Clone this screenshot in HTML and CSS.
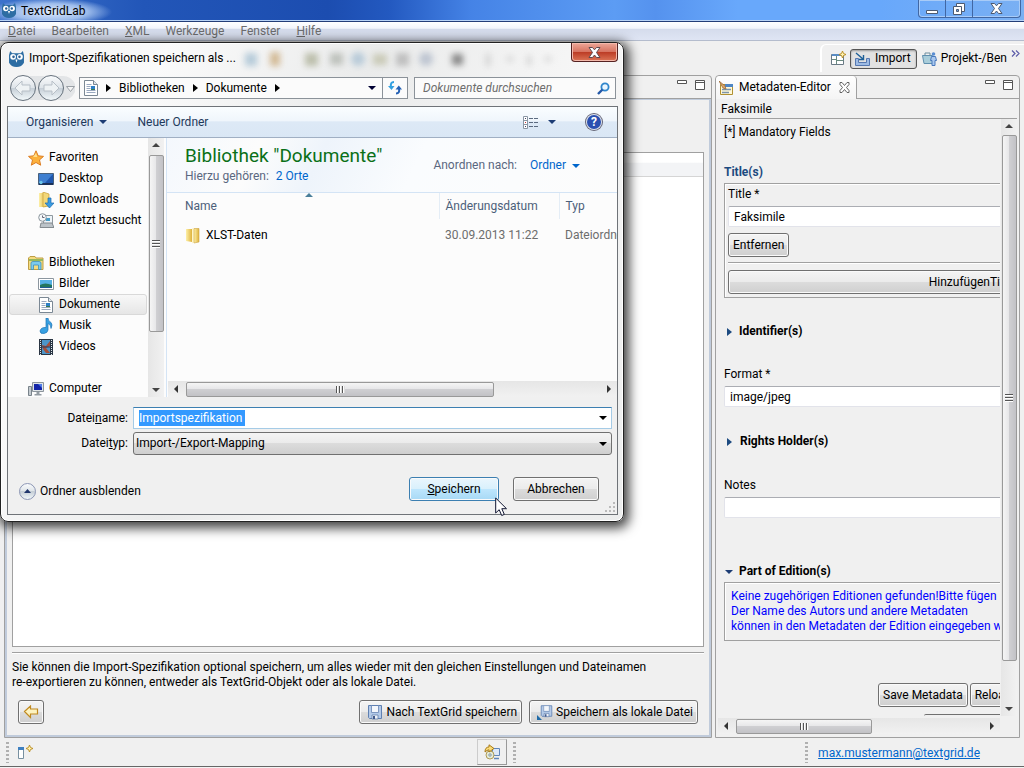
FILE: index.html
```html
<!DOCTYPE html>
<html lang="de">
<head>
<meta charset="utf-8">
<meta name="viewport" content="width=device-width, initial-scale=1">
<title>TextGridLab</title>
<link rel="stylesheet" href="styles.css">
</head>
<body>
<svg class="defs" width="0" height="0" aria-hidden="true">
  <defs>
    <linearGradient id="gold" x1="0" x2="1" y1="0" y2="0"><stop offset="0" stop-color="#fdf0a8"/><stop offset="1" stop-color="#dfb23c"/></linearGradient>
    <linearGradient id="glass" x1="0" x2="0" y1="0" y2="1"><stop offset="0" stop-color="#fbfcfd"/><stop offset=".5" stop-color="#dde3e8"/><stop offset=".5" stop-color="#c5ced6"/><stop offset="1" stop-color="#f4fafc"/></linearGradient>
    <symbol id="owl" viewBox="0 0 14 15">
      <path d="M1 0l2 2h8l2-2 1 4v7q-2 4-7 4T0 11V4z" fill="#2d6da3"/>
      <circle cx="3.800" cy="5.500" r="2.700" fill="#fff"/><circle cx="10.200" cy="5.500" r="2.700" fill="#fff"/>
      <circle cx="4.200" cy="5.500" r="1.200" fill="#2d5f92"/><circle cx="9.800" cy="5.500" r="1.200" fill="#2d5f92"/>
      <path d="M6 8h2l-1 3z" fill="#fff"/>
    </symbol>
    <symbol id="doc" viewBox="0 0 14 16">
      <path d="M.5.5h9l4 4v11H.5z" fill="#fff" stroke="#7b8894"/><path d="M9.500.5v4h4" fill="#dfe5ea" stroke="#7b8894"/>
      <path d="M2.500 4.500h5M2.500 6.500h4M2.500 8.500h4M2.500 10.500h9M2.500 12.500h9" stroke="#9aa9c0"/><path d="M7 6h4v4H7z" fill="#2d7fc6"/><path d="M7 9h4v1H7z" fill="#3a7a50"/>
    </symbol>
    <symbol id="disk" viewBox="0 0 16 16">
      <path d="M1.500 1.500h13v13h-12l-1-1z" fill="#b4cae8" stroke="#5f80b2"/><path d="M4 2h8v6H4z" fill="#f3f6fb"/><path d="M4.500 1.500v7h7v-7" fill="none" stroke="#7d97c0"/><path d="M5 11h6v4H5z" fill="#eef2f8" stroke="#5575a8" stroke-width=".7"/><path d="M6 12h2v3H6z" fill="#41598a"/>
    </symbol>
    <symbol id="spark" viewBox="0 0 7 7"><path d="M3.500 0l1 2.500L7 3.500l-2.500 1-1 2.500-1-2.500L0 3.500l2.500-1z" fill="#fff3b0" stroke="#b98a1d" stroke-width=".9"/></symbol>
  </defs>
</svg>

<div class="app">
  <header class="titlebar">
    <svg class="owl" width="14" height="15"><use href="#owl"/></svg>
    <h1>TextGridLab</h1>
    <div class="winbtns">
      <button type="button" aria-label="Minimieren"><svg width="14" height="12"><path d="M1.500 7.500h11v3h-11z" fill="#fff" stroke="#4d5a70"/></svg></button>
      <button type="button" aria-label="Wiederherstellen"><svg width="12" height="12"><path d="M3.500.5h8v8h-8z" fill="#fff" stroke="#4d5a70"/><path d="M.5 3.500h8v8h-8z" fill="#fff" stroke="#4d5a70"/><path d="M3.500 6.500h2v2h-2z" fill="#6fa5e8" stroke="#4d5a70"/></svg></button>
      <button class="wide" type="button" aria-label="Schließen"><svg width="13" height="11"><path d="M1 .5h3.500l2 2.300 2-2.300H12L8.500 5.500l3.500 5H8.500l-2-2.500-2 2.500H1l3.500-5z" fill="#fff" stroke="#4d5a70"/></svg></button>
    </div>
  </header>

  <nav class="menubar" aria-label="Menü">
    <button type="button"><u>D</u>atei</button><button type="button">Bearbeiten</button><button type="button"><u>X</u>ML</button><button type="button">Werkzeuge</button><button type="button">Fenster</button><button type="button"><u>H</u>ilfe</button>
  </nav>

  <div class="toolbar">
    <div class="perspectives">
      <button class="flat" type="button" aria-label="Perspektive öffnen"><svg width="15" height="15"><path d="M.5 3.500h12v10H.5z" fill="#fff" stroke="#6a7a86"/><path d="M1 3h11v2H1z" fill="#5b8dc4"/><path d="M5.500 5v8M5.500 9.500h7M1 8.500h4" stroke="#6a8a80"/><use href="#spark" x="8" y="0" width="7" height="7"/></svg></button>
      <button class="pressed" type="button"><svg width="15" height="14"><path d="M.5 6.500h3v4h8v-4h3v7H.5z" fill="#9dbbe4" stroke="#5678b0"/><path d="M1 1l7 6M8.500 3v4.500H4" fill="none" stroke="#1e6098" stroke-width="1.400"/></svg>Import</button>
      <button class="flat" type="button"><svg width="15" height="15"><path d="M.5 4.500h10v8H2z" fill="#a9cdda" stroke="#5f8fae"/><path d="M3 4V2h5v2" fill="none" stroke="#6d8d9f"/><circle cx="11.500" cy="3" r="1.800" fill="#5a8ed2"/><path d="M9.500 5.500h4l1 4h-1.500v5h-3v-5H8.500z" fill="#aac8ee" stroke="#4878bd"/></svg>Projekt-/Ben</button>
      <button class="more" type="button" aria-label="Mehr"><svg width="9" height="7"><path d="M1 .5l3 3-3 3M5 .5l3 3-3 3" fill="none" stroke="#5a5aa8" stroke-width="1.200"/></svg></button>
    </div>
  </div>

  <main class="workbench">
    <section class="view import-view" aria-label="Import">
      <div class="view-head"><span class="view-tools">
        <button type="button" aria-label="Minimieren"><svg width="10" height="10"><path d="M.5.5h9v3h-9z" fill="#fff" stroke="#555"/></svg></button>
        <button type="button" aria-label="Maximieren"><svg width="10" height="10"><path d="M.5.5h9v9h-9zM.5 2.500h9" fill="#fff" stroke="#555"/></svg></button></span>
      </div>
      <div class="import-body">
        <div class="list"><div class="list-head"></div></div>
        <hr>
        <p>Sie können die Import-Spezifikation optional speichern, um alles wieder mit den gleichen Einstellungen und Dateinamen<br>re-exportieren zu können, entweder als TextGrid-Objekt oder als lokale Datei.</p>
        <div class="actions">
          <button class="btn back" type="button" aria-label="Zurück"><svg width="16" height="14"><path d="M1.500 6.500l6-5.500v3h7v5h-7v3.500z" fill="#fdf3c0" stroke="#c08a20" stroke-width="1.200"/></svg></button>
          <button class="btn" type="button"><svg width="16" height="16"><use href="#disk"/></svg>Nach TextGrid speichern</button>
          <button class="btn" type="button"><svg width="16" height="16"><use href="#disk" x="3" y="0" width="13" height="14"/><path d="M0 11v5h5z" fill="#1e6aa8"/></svg>Speichern als lokale Datei</button>
        </div>
      </div>
    </section>

    <section class="view meta-view" aria-label="Metadaten-Editor">
      <div class="view-head">
        <div class="tab"><svg width="15" height="14"><path d="M1.500 3.500h12v10h-12z" fill="#fff8d8" stroke="#b09030"/><path d="M6 3h8v3H6z" fill="#4f86c4"/><path d="M3 8.500h9M3 11.500h7" stroke="#7c93a8" stroke-width="1.500"/><path d="M0 0l6 5 1 3-3-1z" fill="#dfa76d" stroke="#9a6a38" stroke-width=".8"/></svg><h2>Metadaten-Editor</h2>
        <button type="button" aria-label="Schließen"><svg width="11" height="11"><path d="M1 .5h2l2.500 3 2.500-3h2v2L7.500 5.500l2.500 3v2H8l-2.500-3-2.500 3H1v-2l2.500-3L1 2.500z" fill="#fff" stroke="#555" stroke-width=".9"/></svg></button></div>
        <span class="view-tools">
        <button type="button" aria-label="Minimieren"><svg width="10" height="10"><path d="M.5.5h9v3h-9z" fill="#fff" stroke="#555"/></svg></button>
        <button type="button" aria-label="Maximieren"><svg width="10" height="10"><path d="M.5.5h9v9h-9zM.5 2.500h9" fill="#fff" stroke="#555"/></svg></button></span>
      </div>
      <p class="crumb">Faksimile</p>
      <div class="scroll-grid">
        <form class="meta-form">
          <p class="mandatory">[*] Mandatory Fields</p>
          <h3 class="blue">Title(s)</h3>
          <div class="group">
            <label for="title">Title *</label>
            <input id="title" type="text" value="Faksimile">
            <button class="btn" type="button">Entfernen</button>
            <hr>
            <button class="btn add" type="button">HinzufügenTitle</button>
          </div>
          <h3 class="fold"><i class="tri-r"></i>Identifier(s)</h3>
          <label for="format">Format *</label>
          <input id="format" type="text" value="image/jpeg">
          <h3 class="fold mid"><i class="tri-r"></i>Rights Holder(s)</h3>
          <label for="notes">Notes</label>
          <input id="notes" type="text">
          <h3 class="fold last"><i class="tri-d"></i>Part of Edition(s)</h3>
          <div class="group note">Keine zugehörigen Editionen gefunden!Bitte fügen<br>Der Name des Autors und andere Metadaten<br>können in den Metadaten der Edition eingegeben w</div>
          <div class="meta-actions"><button class="btn" type="button">Save Metadata</button><button class="btn" type="button">Reload</button></div>
          <div class="meta-next"></div>
        </form>
        <div class="vbar"><i class="tri-u"></i><div class="thumb"><i class="grip"></i></div><i class="tri-dn"></i></div>
        <div class="hbar"><i class="tri-l"></i><div class="track"><div class="thumb"><i class="grip"></i></div></div><i class="tri-rt"></i></div>
      </div>
    </section>
  </main>

  <footer class="status">
    <i class="handle"></i>
    <button class="flat" type="button" aria-label="Schnellansicht"><svg width="15" height="15"><path d="M.5 2.500h5v11h-5z" fill="#fff" stroke="#7890a0"/><path d="M0 2h6v3H0z" fill="#3f80c0"/><use href="#spark" x="8" y="0" width="7" height="7"/></svg></button>
    <button class="flat launch" type="button" aria-label="Aktualisierung"><svg width="17" height="16"><path d="M8.500 4.500h7v7h-7z" fill="#dce8f8" stroke="#5f86ba"/><path d="M10 14.500h5" stroke="#5f86ba" stroke-width="1.500"/><circle cx="6" cy="11" r="4" fill="#e4ead8" stroke="#b09c58"/><circle cx="6" cy="11" r="1.200" fill="#fff" stroke="#7890a0"/><path d="M1 8q0-5 4-5V.8L10 4.500 5 8V5.800Q3 6 1 8z" fill="#fbdc78" stroke="#a87a18"/></svg></button>
    <i class="handle"></i>
    <i class="handle end"></i>
    <a href="mailto:max.mustermann@textgrid.de">max.mustermann@textgrid.de</a>
  </footer>
  <div class="desk-edge"></div>
</div>

<section class="dialog" role="dialog" aria-labelledby="dlg-title">
  <svg class="haze" width="320" height="26" aria-hidden="true"><g opacity=".5">
    <path d="M12 5h12v13H12z" fill="#7aa3c0"/><path d="M37 4h10v14H37z" fill="#b5843c"/><path d="M72 5h13v13H72z" fill="#8c8f6a"/><path d="M97 5h13v12H97z" fill="#8f958c"/><circle cx="125" cy="11" r="7" fill="#86aac5"/><path d="M140 6h14v11h-14z" fill="#aaa983"/><path d="M163 5h13v13h-13z" fill="#929292"/><circle cx="193" cy="11" r="7" fill="#8f9db5"/><path d="M219 6h11v11h-11z" fill="#222"/><path d="M253 6h4v12h-4zM274 9h6v4h-6zM294 8h4v9h-4zM312 9h6v4h-6z" fill="#aaa"/></g></svg>
  <header class="dlg-title"><svg width="15" height="16"><use href="#owl"/></svg><h2 id="dlg-title">Import-Spezifikationen speichern als ...</h2>
    <button class="dlg-close" type="button" aria-label="Schließen"><svg width="13" height="11"><path d="M1 .5h3.500l2 2.300 2-2.300H12L8.500 5.500l3.500 5H8.500l-2-2.500-2 2.500H1l3.500-5z" fill="#fff" stroke="#5d4b50"/></svg></button>
  </header>
  <div class="nav">
    <svg class="arrows" width="68" height="28" aria-hidden="true"><path d="M14 2h40q8 0 12 8v8q-4 8-12 8H14z" fill="#d0d4d7" opacity=".5"/><g stroke="#66717c" fill="url(#glass)"><circle cx="14" cy="14" r="12.500"/><circle cx="42" cy="14" r="12.500"/></g><path d="M6 14l7-7v4h8v6h-8v4zM50 14l-7-7v4h-8v6h8v4z" fill="#eef2f4" stroke="#b7bfc7"/><path d="M57.500 12.500h8l-4 5z" fill="#f5f5f5" stroke="#9aa0a6"/></svg>
    <div class="address">
      <svg width="14" height="16"><use href="#doc"/></svg><i class="tri-k"></i><a href="#bibliotheken">Bibliotheken</a><i class="tri-k"></i><a href="#dokumente">Dokumente</a><i class="tri-k"></i>
      <button class="drop" type="button" aria-label="Verlauf"><i class="tri-navy"></i></button>
      <button class="refresh" type="button" aria-label="Aktualisieren"><svg width="14" height="14"><path d="M6 1Q2 1 3 6" fill="none" stroke="#33a0e0" stroke-width="2"/><path d="M0 5h6.500L3.500 9z" fill="#33a0e0"/><path d="M8 12.500q4 0 3-5" fill="none" stroke="#2460b4" stroke-width="2"/><path d="M7.500 8.500H14L10.800 4.500z" fill="#2460b4"/></svg></button>
    </div>
    <div class="search"><input type="text" aria-label="Suchen" placeholder="Dokumente durchsuchen"><svg width="13" height="13"><circle cx="8" cy="5" r="3.600" fill="#eaf6ff" stroke="#2f86cc" stroke-width="1.800"/><path d="M5.500 7.500L1 12" stroke="#2458a8" stroke-width="2.400"/></svg></div>
  </div>

  <div class="client">
    <div class="commands">
      <button type="button">Organisieren<i class="tri-b"></i></button><button type="button">Neuer Ordner</button>
      <button class="viewmode" type="button" aria-label="Ansicht"><svg width="15" height="13"><path d="M.5.5h4v12h-4zM.5 4.500h4M.5 8.500h4" fill="#fff" stroke="#8a96a4"/><path d="M2 2h1v1H2zM2 10h1v1H2z" fill="#446"/><path d="M2 6h1v1H2z" fill="#c33"/><path d="M6 2.500h4M11 2.500h4M6 6.500h4M11 6.500h4M6 10.500h4M11 10.500h4" stroke="#5c6b80"/></svg><i class="tri-b"></i></button>
      <button class="help" type="button" aria-label="Hilfe">?</button>
    </div>
    <div class="panes">
      <nav class="tree" aria-label="Ordner">
        <ul>
          <li><a href="#f"><svg width="16" height="16"><path d="M8 .8l2.200 5 5.300.6-4 3.500 1.200 5.300L8 12.500l-4.700 2.700 1.200-5.300-4-3.500 5.300-.6z" fill="#fcb13c" stroke="#dc7d24"/><path d="M8 3l1.300 4H5z" fill="#ffe08a"/></svg>Favoriten</a></li>
          <li class="sub"><a href="#d"><svg width="16" height="14"><path d="M.5 1.500h15v11H.5z" fill="#1f57ae" stroke="#49617c"/><path d="M1 2h14L7 11H1z" fill="#3f7fd0"/><path d="M1 11h14v2H1z" fill="#1b3158"/><circle cx="3" cy="10.500" r="1.700" fill="#6dc6e8"/></svg>Desktop</a></li>
          <li class="sub"><a href="#dl"><svg width="16" height="16"><path d="M1 1h7v14H1z" fill="url(#gold)"/><path d="M5 0l6 2v12l-6 1z" fill="#f3d878" stroke="#c59d3a" stroke-width=".7"/><path d="M10 6h3v5h3l-4.500 5L7 11h3z" fill="#3a9be0" stroke="#1d6aaf" stroke-width=".7"/></svg>Downloads</a></li>
          <li class="sub"><a href="#z"><svg width="16" height="16"><path d="M5.500 2.500h9v9h-9z" fill="#eef4f8" stroke="#8e989f"/><path d="M3 10h11l2 4.500H2z" fill="#bcc3c8" stroke="#848b90"/><path d="M8 5h4v3H8z" fill="#48a0cc"/><circle cx="4.500" cy="4.500" r="3.800" fill="#f5f8fa" stroke="#8b959c"/><path d="M4.500 2.500v2H6.500" fill="none" stroke="#667"/></svg>Zuletzt besucht</a></li>
          <li class="top"><a href="#bibliotheken"><svg width="16" height="14"><path d="M.5 2L2 .5h5L8 2h7v11.500H.5z" fill="#f5dc80" stroke="#bf9e45"/><path d="M1 4h14" stroke="#97b85c" stroke-width="2"/><path d="M3 13.500V7q0-1.500 2-1.500h6q2 0 2 1.500v6.500h-2.500V9h-5v4.500z" fill="#7ccbee" stroke="#3d91bd" stroke-width=".8"/></svg>Bibliotheken</a></li>
          <li class="sub"><a href="#bi"><svg width="16" height="12"><path d="M.5.5h15v11H.5z" fill="#fff" stroke="#8c969f"/><path d="M2 2h12v8H2z" fill="#55b1e5"/><path d="M2 7q5-3 12 0v3H2z" fill="#23765e"/><path d="M2 9h12v1H2z" fill="#1e5b95"/></svg>Bilder</a></li>
          <li class="sub sel"><a href="#dokumente"><svg width="16" height="16"><use href="#doc"/></svg>Dokumente</a></li>
          <li class="sub"><a href="#m"><svg width="16" height="16"><path d="M8 0h2q0 3 3 4.500 2 2 0 6 0-4-3-5v6.500q-.5 3-4 3.500-4 .5-4-2.500 1-4 6-3.500z" fill="#38a1e2" stroke="#1e72b6" stroke-width=".7"/></svg>Musik</a></li>
          <li class="sub"><a href="#v"><svg width="16" height="16"><path d="M1 0h14v16H1z" fill="#2b3644"/><path d="M4 1h8v14H4z" fill="#4c95c8"/><path d="M4 6l4 1 4-5v5L8 9l4 5H8L5 10z" fill="#a64f38"/><path d="M4 8h8" stroke="#243d60"/><path d="M2.500 1v15M13.500 1v15" stroke="#dfe8ee" stroke-dasharray="1 1"/></svg>Videos</a></li>
          <li class="top"><a href="#c"><svg width="16" height="14"><path d="M.5 4.500h3v9h-3z" fill="#c4cbd0" stroke="#79838b"/><path d="M4.500.5h11v9h-11z" fill="#dfe4e8" stroke="#8c959c"/><path d="M6 2h8v6H6z" fill="#1425a8"/><path d="M10 2h4v4z" fill="#4f7ce8"/><path d="M8.500 10h3v2h2v1.500h-7V12h2z" fill="#939ca3"/></svg>Computer</a></li>
        </ul>
      </nav>
      <div class="vbar"><i class="tri-u"></i><div class="thumb"><i class="grip"></i></div><i class="tri-dn"></i></div>
      <div class="files">
        <div class="lib">
          <div><h3>Bibliothek "Dokumente"</h3><p>Hierzu gehören: <a href="#orte">2 Orte</a></p></div>
          <p class="arrange">Anordnen nach: <button type="button">Ordner<i class="tri-o"></i></button></p>
        </div>
        <div class="tablewrap"><table>
          <thead><tr><th class="c1">Name<i class="sort"></i></th><th class="c2">Änderungsdatum</th><th class="c3">Typ</th></tr></thead>
          <tbody><tr><td><span class="fname"><svg width="15" height="17"><path d="M1 2h6v13l-6-1z" fill="url(#gold)"/><path d="M7 1l3 1v13l-3 1.500z" fill="#fff6c8"/><path d="M9 1.500h5V15l-5 1z" fill="url(#gold)" stroke="#cda544" stroke-width=".6"/></svg>XLST-Daten</span></td><td>30.09.2013 11:22</td><td>Dateiordner</td></tr></tbody>
        </table></div>
        <div class="hbar"><i class="tri-l"></i><div class="track"><div class="thumb"><i class="grip"></i></div></div><i class="tri-rt"></i></div>
      </div>
    </div>
    <form class="savebox">
      <label for="fn">Datei<u>n</u>ame:</label>
      <div class="combo"><input id="fn" type="text" value="Importspezifikation"><button type="button" aria-label="Liste"><i class="tri-black"></i></button></div>
      <label for="ft">Datei<u>t</u>yp:</label>
      <div class="pick"><select id="ft"><option>Import-/Export-Mapping</option></select><i class="tri-black"></i></div>
      <div class="dlg-actions">
        <button class="hide" type="button"><svg width="17" height="17"><circle cx="8.500" cy="8.500" r="8" fill="url(#glass)" stroke="#8c96b4"/><path d="M5 10h7L8.500 6z" fill="#20366c"/></svg>Ordner ausblenden</button>
        <button class="btn primary" type="button"><span><u>S</u>peichern</span></button>
        <button class="btn" type="button">Abbrechen</button>
      </div>
      <svg class="resize" width="10" height="10" aria-hidden="true"><path d="M8 0h2v2H8zM4 4h2v2H4zM8 4h2v2H8zM0 8h2v2H0zM4 8h2v2H4zM8 8h2v2H8z" fill="#bbb"/></svg>
    </form>
  </div>
</section>
<svg class="cursor" width="13" height="20" aria-hidden="true"><path d="M.7 1v15l3.500-3.300 2.500 5.800 2.600-1.100-2.500-5.700h4.700z" fill="#fff" stroke="#111632"/></svg>
</body>
</html>
```
FILE: styles.css
```css
* { box-sizing: border-box; }
body { margin: 0; font: 12px/15px Roboto, "Open Sans", sans-serif; color: #000; background: #f0f0f0; }
h1, h2, h3, p, ul { margin: 0; padding: 0; font-size: inherit; font-weight: 400; }
ul { list-style: none; }
button, input, select { font: inherit; color: inherit; margin: 0; }
button { background: none; border: 0; padding: 0; white-space: nowrap; }
a { color: inherit; text-decoration: none; }
svg { display: block; flex: none; }
i { display: block; flex: none; }
.defs { position: absolute; }
hr { width: 100%; margin: 0; border: 0; border-top: 1px solid #a0a0a0; border-bottom: 1px solid #fff; }

.app { min-height: 100vh; display: flex; flex-direction: column; overflow: hidden; }

.titlebar { height: 22px; display: flex; align-items: center; gap: 5px; padding-left: 2px; border-bottom: 1px solid #243e78; box-shadow: inset 0 -1px #b8d3f6;
  background: radial-gradient(ellipse 62px 14px at 50px 12px, #dfeafc 0, #9ebdec 60%, transparent 100%), linear-gradient(90deg, #3c72cc 0, #2256b8 14%, #1c4db0 32%, #2359c0 38%, #4583e6 46%, #5c9cf4 60%, #5592ee 64%, #68a8fb 72%, #68a8fb 86%, #7ab0f3 100%); }
.titlebar h1 { flex: 1; line-height: 20px; }
.winbtns { display: flex; align-self: flex-start; height: 18px; margin-right: 3px; border: 1px solid #4167a3; border-top: 0; border-radius: 0 0 4px 4px; box-shadow: inset 0 0 0 1px #a8cbf7; }
.winbtns button { width: 27px; display: grid; place-items: center; border-right: 1px solid #4167a3; }
.winbtns .wide { width: 47px; border: 0; }

.menubar { height: 19px; display: flex; align-items: center; gap: 16px; padding: 1px 0 0 8px; color: #6d6d6d; background: linear-gradient(#fff 0, #f2f5fb 35%, #d5dcec 40%, #dfe5f4 100%); border-bottom: 1px solid #b4bccd; }

.toolbar { height: 34px; display: flex; justify-content: flex-end; padding-top: 3px; }
.perspectives { width: 204px; height: 28px; display: flex; align-items: center; gap: 4px; padding-left: 9px; border-top: 1px solid #fff; border-left: 2px solid #fff; border-radius: 6px 0 0 0; }
.flat { display: flex; align-items: center; gap: 4px; }
.pressed { display: flex; align-items: center; gap: 5px; height: 20px; padding: 0 5px 0 4px; margin-right: 1px; border: 1px solid #555; border-radius: 3px; background: #e2e2e2; box-shadow: inset 0 1px 2px #999; }
.more { align-self: flex-start; padding-top: 5px; }

.workbench { flex: 1; display: grid; grid-template-columns: minmax(0, 1fr) 305px; gap: 3px; padding: 0 4px; }
.view { display: flex; flex-direction: column; min-width: 0; border: 1px solid #a0a0a0; border-radius: 4px 4px 0 0; }
.view-head { height: 23px; display: flex; border-bottom: 1px solid #a0a0a0; }
.view-tools { display: flex; gap: 8px; margin-left: auto; padding: 4px 6px 0 0; }
.view-tools button { height: 10px; }
.import-body { flex: 1; display: flex; flex-direction: column; padding: 52px 5px 11px; border: 2px solid #c0cbdb; border-top: 1px solid #c0cbdb; }
.list { flex: 1; border: 1px solid #a0a0a0; background: #fff; margin-bottom: 5px; }
.list-head { height: 24px; border-bottom: 1px solid #d5d5d5; background: linear-gradient(#fff 40%, #f3f4f6 45%); }
.import-body p { padding: 6px 0 10px; white-space: nowrap; }
.actions { display: flex; gap: 7px; padding: 0 6px; }
.btn { display: inline-flex; align-items: center; justify-content: center; gap: 3px; height: 24px; padding: 0 4px; border: 1px solid #707070; border-radius: 3px; background: linear-gradient(#f4f4f4 0, #ebebeb 49%, #dcdcdc 50%, #cfcfcf 100%); box-shadow: inset 0 0 0 1px #fafafa; }
.actions .btn { padding-left: 7px; }
.actions .back { width: 26px; margin-right: auto; padding: 0; }

.tab { display: flex; align-items: center; gap: 5px; height: 23px; padding: 0 6px 0 3px; background: linear-gradient(#fff, #f4f4f4); border-right: 1px solid #a0a0a0; border-radius: 4px 4px 0 0; }
.tab button { margin-left: 3px; }
.crumb { height: 20px; margin: 0 2px; padding: 3px 3px 0; border-bottom: 1px solid #a0a0a0; }
.scroll-grid { flex: 1; display: grid; grid-template: minmax(0, 1fr) 18px / minmax(0, 1fr) 16px; padding: 0 2px 3px; column-gap: 1px; }
.meta-form { display: flex; flex-direction: column; align-items: stretch; overflow: hidden; padding-left: 6px; white-space: nowrap; }
.meta-form > * { flex: none; }
.mandatory { padding-top: 6px; height: 46px; }
.meta-form h3 { font-weight: 700; }
.blue { color: #1c4a80; height: 18px; }
.group { margin-right: -4px; padding: 3px; border: 1px solid #a0a0a0; box-shadow: inset 1px 1px #fff; }
.group label, .group input { display: block; }
.meta-form input { width: 320px; height: 21px; padding: 0 5px; border: 1px solid #e2e3ea; border-top-color: #abadb3; border-radius: 2px 0 0 2px; background: #fff; }
.group input { margin: 4px 0 6px; }
.group hr { margin: 5px 0 6px; }
.group .add { display: flex; width: 486px; }
.fold { display: flex; align-items: center; gap: 7px; padding-left: 3px; margin: 26px 0 28px; }
.meta-form > label { margin-bottom: 4px; }
.fold.mid { gap: 8px; margin: 27px 0 29px; }
.fold.last { margin: 46px 0 3px; gap: 6px; padding-left: 1px; }
.note { padding: 6px; color: #00f; }
.meta-actions { display: flex; gap: 2px; margin-top: auto; padding: 0 0 7px 154px; }
.meta-next { height: 2px; margin-left: 200px; border-top: 1px solid #707070; border-radius: 3px 0 0 0; }

.tri-r, .tri-k { border: 4px solid transparent; border-left: 5px solid #1c4a80; border-right: 0; }
.tri-k { border-left-color: #000; }
.tri-d, .tri-b, .tri-navy, .tri-o, .tri-black, .tri-dn { border: 4px solid transparent; border-top: 4px solid #1c3c74; border-bottom: 0; }
.tri-navy { border-top-color: #003; }
.tri-o { border-top-color: #06c; }
.tri-black { border-top-color: #000; }
.tri-dn, .tri-u { border-width: 4px; margin: 5px 4px; }
.tri-dn { border-top-color: #444; border-bottom: 0; }
.tri-u { border: 4px solid transparent; border-bottom-color: #444; border-top: 0; }
.tri-l, .tri-rt { border: 4px solid transparent; margin: 0 6px; }
.tri-l { border-right-color: #333; border-left: 0; }
.tri-rt { border-left-color: #333; border-right: 0; }
.vbar { display: flex; flex-direction: column; align-items: center; justify-content: space-between; background: linear-gradient(90deg, #e6e6e6, #f1f1f1); }
.vbar .thumb { width: 15px; display: grid; place-items: center; border: 1px solid #999; border-radius: 2px; background: linear-gradient(90deg, #f5f5f5 0, #e6e6e8 48%, #cfcfd2 50%, #c2c2c6 100%); }
.vbar .grip { width: 8px; height: 8px; background: repeating-linear-gradient(#555 0 1px, #fff 1px 2px, #ddd 2px 3px); }
.meta-view .thumb { height: 526px; }
.meta-view .vbar .thumb { margin-bottom: auto; margin-top: 7px; }
.meta-view .vbar .tri-u { margin-bottom: 0; }
.hbar { display: flex; align-items: center; height: 16px; background: linear-gradient(#e6e6e6, #f1f1f1); }
.meta-view .hbar { align-self: end; }
.track { flex: 1; }
.meta-view .hbar .thumb, .hbar .thumb { height: 15px; display: grid; place-items: center; border: 1px solid #999; border-radius: 2px; background: linear-gradient(#f5f5f5 0, #e6e6e8 48%, #cfcfd2 50%, #c2c2c6 100%); }
.hbar .grip { width: 9px; height: 7px; background: repeating-linear-gradient(90deg, #555 0 1px, #fff 1px 2px, #ddd 2px 3px); }
.meta-view .hbar .thumb { width: 136px; margin-left: 2px; }

.status { height: 28px; display: flex; align-items: center; padding-left: 6px; }
.handle { width: 3px; height: 21px; background: repeating-linear-gradient(#b0b0b0 0 2px, transparent 2px 4px); }
.status .flat { margin-left: 9px; }
.status .launch { width: 30px; height: 26px; justify-content: center; margin: 0 6px 0 444px; border: 1px solid #ccc; border-right-color: #999; border-bottom-color: #999; }
.status .end { margin-left: auto; }
.status a { margin: 2px 44px 0 10px; color: #06c; text-decoration: underline; }
.desk-edge { height: 2px; background: #f4f4f4; border-top: 1px solid #666; }

.dialog { position: absolute; left: 0; top: 42px; width: 624px; padding: 0 5px 6px 6px; border: 1px solid #222; border-radius: 8px; background: linear-gradient(115deg, #f3f3f3 0, #fafafa 20%, #eaebeb 45%, #f6f6f6 70%, #eceded 100%); box-shadow: inset 0 0 0 1px #fff, 2px 3px 12px 3px rgba(0, 0, 0, .75); }
.haze { position: absolute; left: 232px; top: 5px; filter: blur(3px); }
.dlg-title { display: flex; align-items: center; height: 31px; gap: 5px; padding-left: 2px; }
.dlg-title h2 { flex: 1; padding-bottom: 1px; }
.dlg-close { align-self: flex-start; display: grid; place-items: center; width: 47px; height: 19px; border: 1px solid #522; border-top: 0; border-radius: 0 0 4px 4px; background: linear-gradient(#eda798 0, #d77461 48%, #bb3a24 50%, #dc7556 100%); box-shadow: inset 0 0 0 1px #f3b9ab; }
.nav { display: flex; align-items: center; height: 28px; margin-bottom: 4px; padding: 0 2px; gap: 2px; }
.address { flex: 1; display: flex; align-items: center; height: 22px; border: 1px solid #8b9299; background: #fbfbfb; padding-left: 4px; }
.address .tri-k { margin: 0 8px; }
.address .drop { margin-left: auto; padding: 8px 6px; }
.address .refresh { display: grid; place-items: center; width: 25px; height: 20px; border-left: 1px solid #8b9299; }
.search { width: 202px; height: 22px; display: flex; align-items: center; margin-left: 4px; padding: 0 5px 0 8px; border: 1px solid #8b9299; background: #fbfbfb; }
.search input { flex: 1; min-width: 0; padding: 0; border: 0; outline: 0; background: none; font-style: italic; }
.search input::placeholder { color: #6d6d6d; opacity: 1; }

.client { border: 1px solid #6f7378; background: #f0f0f0; }
.commands { display: flex; align-items: center; height: 31px; padding: 0 16px 0 18px; color: #1e395b; background: linear-gradient(#fafdff 0, #f0f6fc 45%, #dde9f6 50%, #dae7f5 100%); border-bottom: 1px solid #a0afc3; }
.commands button { display: flex; align-items: center; gap: 6px; margin-right: 30px; }
.commands .viewmode { margin: 0 31px 0 auto; gap: 10px; }
.commands .help { justify-content: center; width: 14px; height: 14px; margin: 0; border-radius: 50%; background: #2a4fb0; color: #fff; font-weight: 700; box-shadow: 0 0 0 1px #dde4f0, 0 0 0 2px #667; }
.panes { display: grid; grid-template-columns: 140px 16px minmax(0, 1fr); height: 259px; background: #fcfcfc; }
.tree { overflow: hidden; padding-top: 9px; }
.tree a { display: flex; align-items: center; gap: 5px; height: 21px; padding-left: 19px; border: 1px solid transparent; white-space: nowrap; }
.tree .sub a { padding-left: 29px; }
.tree .top { margin-top: 21px; }
.tree .sel a { margin: 0 1px; padding-left: 28px; border-color: #d9d9d9; border-radius: 3px; background: linear-gradient(#f8f8f8, #e6e6e6); }
.panes .vbar .thumb { height: 177px; margin-bottom: auto; }
.panes .vbar .tri-u { margin-bottom: 8px; }
.files { display: flex; flex-direction: column; min-width: 0; margin-left: 2px; border-left: 1px solid #d4e4f5; }
.lib { display: flex; justify-content: space-between; height: 54px; padding: 7px 37px 0 18px; background: linear-gradient(115deg, #f4f8fd 0, #fcfcfc 20%, #eef4fb 34%, #fafcfe 55%, #fcfcfc 100%); color: #5a6780; }
.lib h3 { font-size: 19px; line-height: 22px; color: #0a7018; }
.lib p { padding-top: 2px; }
.lib p a { margin-left: 4px; color: #06c; }
.lib .arrange { padding-top: 13px; }
.arrange button { display: inline-flex; align-items: center; gap: 6px; margin-left: 10px; color: #06c; }
.tablewrap { flex: 1; overflow: hidden; border-top: 1px solid #d4e4f5; }
table { width: 520px; table-layout: fixed; border-collapse: collapse; color: #6d6d6d; }
th, td { padding: 0 6px; text-align: left; font-weight: 400; white-space: nowrap; }
th { position: relative; height: 26px; color: #4c607a; border-right: 1px solid #e4edf6; }
td { height: 33px; }
.c1 { width: 272px; }
.c2 { width: 120px; }
th:first-child, td:first-child { padding-left: 18px; }
.sort { position: absolute; left: 138px; top: 0; border: 4px solid transparent; border-top: 0; border-bottom-color: #4a7f9a; }
.fname { display: flex; align-items: center; gap: 6px; color: #000; }
.files .thumb { width: 308px; margin-left: 2px; }
.files .hbar { margin-left: 1px; }

.savebox { position: relative; display: grid; grid-template-columns: 120px minmax(0, 1fr); gap: 3px 5px; align-items: center; padding: 10px 5px 13px 0; }
.savebox > label { text-align: right; }
.combo { display: flex; align-items: center; justify-content: space-between; height: 22px; padding: 0 4px 0 5px; border: 1px solid #a5cbe6; border-top-color: #3c7fb1; background: #fff; }
.combo input { display: block; width: 106px; height: 16px; padding: 0; border: 0; outline: 0; background: #39f; color: #fff; field-sizing: content; }
.pick { display: grid; grid-template-columns: minmax(0, 1fr) auto; align-items: center; height: 23px; border: 1px solid #707070; border-radius: 3px; background: linear-gradient(#f4f4f4 0, #ebebeb 49%, #dcdcdc 50%, #cfcfcf 100%); padding-right: 4px; }
.pick select { appearance: none; border: 0; background: none; padding: 0 2px; outline: 0; }
.dlg-actions { grid-column: 1 / -1; display: flex; align-items: center; gap: 14px; padding: 19px 13px 0 11px; }
.dlg-actions .btn { width: 86px; }
.dlg-actions .primary { width: 90px; border-color: #3c7fb1; background: linear-gradient(#eaf6fd 0, #d9f0fc 49%, #bee6fd 50%, #a7d9f5 100%); }
.hide { display: flex; align-items: center; gap: 4px; margin-right: auto; padding-top: 4px; }
.resize { position: absolute; right: 2px; bottom: 2px; }
.cursor { position: absolute; left: 495px; top: 497px; }
```
